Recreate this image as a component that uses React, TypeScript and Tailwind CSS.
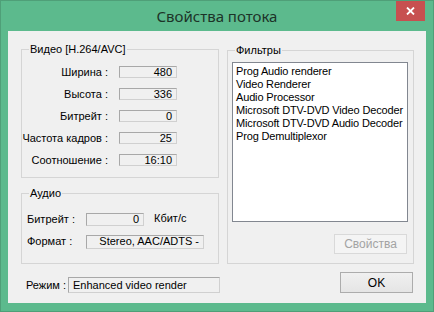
import React from "react";

const Field = ({ w, h, children, align = "right" }: { w: string; h: string; children: React.ReactNode; align?: "right" | "left" }) => (
  <div
    className={`${w} ${h} border border-[#a8a8a8] border-r-[#d0d0d0] border-b-[#d0d0d0] bg-[#f0f0f0] flex items-center overflow-hidden whitespace-nowrap ${align === "right" ? "justify-end pr-[4px]" : "justify-start pl-[4px]"}`}
  >
    {children}
  </div>
);

const Group = ({ title, className, children }: { title: string; className: string; children: React.ReactNode }) => (
  <div className={`relative border border-[#d5d5d5] ${className}`}>
    <span className="absolute top-[-7px] left-[7px] px-[1px] bg-[#f0f0f0] leading-[13px]">{title}</span>
    {children}
  </div>
);

const videoRows: [string, string][] = [
  ["Ширина :", "480"],
  ["Высота :", "336"],
  ["Битрейт :", "0"],
  ["Частота кадров :", "25"],
  ["Соотношение :", "16:10"],
];

const filters = [
  "Prog Audio renderer",
  "Video Renderer",
  "Audio Processor",
  "Microsoft DTV-DVD Video Decoder",
  "Microsoft DTV-DVD Audio Decoder",
  "Prog Demultiplexor",
];

export default function App() {
  return (
    <div className="w-[434px] h-[312px] bg-[#5cba8d] border border-[#4f9f78] flex flex-col font-['Liberation_Sans',Arial,sans-serif] text-[11px] text-black">
      <div className="relative h-[30px] flex items-center justify-center">
        <span className="font-['Noto_Sans',sans-serif] text-[15px] text-[#1c3328] leading-none mt-[1px]">Свойства потока</span>
        <div className="absolute top-0 right-[8px] w-[29px] h-[20px] bg-[#c75050] flex items-center justify-center">
          <svg width="9" height="8" viewBox="0 0 9 8">
            <path d="M1 0.5 L8 7.5 M8 0.5 L1 7.5" stroke="#ffffff" strokeWidth="1.8" />
          </svg>
        </div>
      </div>
      <div className="ml-[7px] w-[418px] h-[272px] bg-[#f0f0f0] flex flex-col pl-[13px] pt-[18px]">
        <div className="flex gap-[8px]">
          <div className="w-[198px] flex flex-col gap-[15px]">
            <Group title="Видео [H.264/AVC]" className="h-[129px]">
              <div className="flex flex-col pt-[16px] gap-[10px]">
                {videoRows.map(([l, v]) => (
                  <div key={l} className="flex items-center h-[12px] leading-[12px]">
                    <div className="w-[86px] text-right whitespace-nowrap">{l}</div>
                    <div className="ml-[11px]">
                      <Field w="w-[58px]" h="h-[12px]">{v}</Field>
                    </div>
                  </div>
                ))}
              </div>
            </Group>
            <Group title="Аудио" className="h-[71px]">
              <div className="flex flex-col pt-[19px] gap-[9px] pl-[5px]">
                <div className="flex items-center h-[13px] leading-[13px]">
                  <div className="w-[59px] whitespace-nowrap">Битрейт :</div>
                  <Field w="w-[58px]" h="h-[13px]">0</Field>
                  <div className="ml-[10px] mt-[-3px]">Кбит/с</div>
                </div>
                <div className="flex items-center h-[13px] leading-[13px]">
                  <div className="w-[59px] whitespace-nowrap">Формат :</div>
                  <Field w="w-[118px]" h="h-[14px]">Stereo, AAC/ADTS -</Field>
                </div>
              </div>
            </Group>
          </div>
          <Group title="Фильтры" className="w-[187px] h-[214px] mt-[1px]">
            <div className="ml-[4px] mt-[11px] w-[176px] h-[160px] bg-white border border-[#828790] pl-[3px] pt-[2px] leading-[13px] text-[11px] tracking-[-0.15px]">
              {filters.map((f) => (
                <div key={f} className="whitespace-nowrap">{f}</div>
              ))}
            </div>
            <div className="ml-[106px] mt-[12px] w-[73px] h-[20px] border border-[#d9d9d9] bg-[#f4f4f4] text-[#a3a3a3] flex items-center justify-center text-[12px]">
              Свойства
            </div>
          </Group>
        </div>
        <div className="flex items-end justify-between mt-[8px] mr-[13px] h-[21px]">
          <div className="flex items-center ml-[5px] h-[16px]">
            <div className="w-[42px] whitespace-nowrap">Режим :</div>
            <Field w="w-[152px]" h="h-[16px]" align="left">Enhanced video render</Field>
          </div>
          <div className="w-[73px] h-[21px] border border-[#acacac] bg-gradient-to-b from-[#f0f0f0] to-[#e5e5e5] flex items-center justify-center text-[12px]">
            OK
          </div>
        </div>
      </div>
    </div>
  );
}
